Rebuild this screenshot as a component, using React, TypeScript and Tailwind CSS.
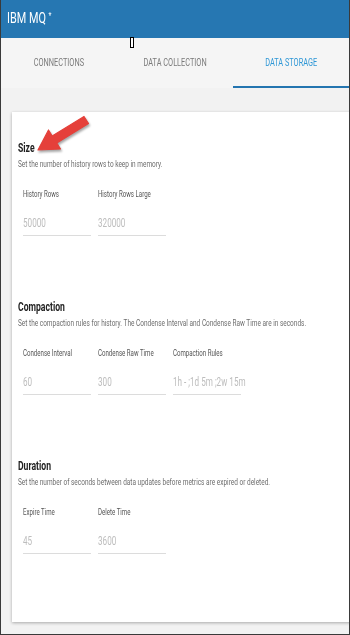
import React from 'react';

const font = { fontFamily: 'Roboto, "Liberation Sans", sans-serif' };

interface Field {
  label: string;
  value: string;
}

interface Section {
  title: string;
  description: string;
  fields: Field[];
}

const sections: Section[] = [
  {
    title: 'Size',
    description: 'Set the number of history rows to keep in memory.',
    fields: [
      { label: 'History Rows', value: '50000' },
      { label: 'History Rows Large', value: '320000' },
    ],
  },
  {
    title: 'Compaction',
    description:
      'Set the compaction rules for history. The Condense Interval and Condense Raw Time are in seconds.',
    fields: [
      { label: 'Condense Interval', value: '60' },
      { label: 'Condense Raw Time', value: '300' },
      { label: 'Compaction Rules', value: '1h - ;1d 5m ;2w 15m' },
    ],
  },
  {
    title: 'Duration',
    description: 'Set the number of seconds between data updates before metrics are expired or deleted.',
    fields: [
      { label: 'Expire Time', value: '45' },
      { label: 'Delete Time', value: '3600' },
    ],
  },
];

const tabs = ['CONNECTIONS', 'DATA COLLECTION', 'DATA STORAGE'];

const App: React.FC = () => {
  return (
    <div
      className="relative w-[350px] h-[635px] flex flex-col overflow-hidden border-x border-b border-[#3a3a3a] bg-[#f2f2f2]"
      style={font}
    >
      {/* Header */}
      <div className="h-[38px] shrink-0 bg-[#2677b2] flex items-center px-[6px]">
        <span className="inline-block origin-left scale-x-[0.75] whitespace-nowrap text-white text-[14.5px] leading-none">
          IBM MQ <span className="text-[9px] relative top-[-4px]">*</span>
        </span>
      </div>

      {/* Tabs */}
      <div className="h-[50px] shrink-0 bg-[#f5f5f5] grid grid-cols-3">
        {tabs.map((tab, i) => (
          <div
            key={tab}
            className={`flex items-center justify-center border-b-[2px] ${
              i === 2 ? 'border-[#2475b0] text-[#2e97d6]' : 'border-transparent text-[#7a7a7a]'
            }`}
          >
            <span className="inline-block scale-x-[0.7] whitespace-nowrap text-[10.5px] leading-none mt-[2px]">
              {tab}
            </span>
          </div>
        ))}
      </div>

      {/* Text cursor */}
      <div className="absolute left-[129px] top-[37px] w-[4px] h-[11px] border border-black bg-white" />

      {/* Body */}
      <div className="flex-1 flex min-h-0">
        <div className="flex-1 pl-[11px] pt-[24px] pr-[10px] pb-[12px]">
          <div className="relative h-full bg-white shadow-[0_1px_3px_rgba(0,0,0,0.3)] pl-[6px] pt-[29px]">
            {sections.map((section, si) => (
              <div key={section.title} className={si > 0 ? 'mt-[64px]' : ''}>
                <div className="h-[14px] leading-[14px] text-[12px] font-bold text-[#222] origin-left scale-x-[0.72] whitespace-nowrap">
                  {section.title}
                </div>
                <div className="mt-[3px] h-[12px] leading-[12px] text-[9px] text-[#6e6e6e] origin-left scale-x-[0.72] whitespace-nowrap">
                  {section.description}
                </div>
                <div className="mt-[18px] pl-[5px] flex gap-[7px]">
                  {section.fields.map((field) => (
                    <div key={field.label} className="w-[68px]">
                      <div className="h-[12px] leading-[12px] text-[8.5px] text-[#555] origin-left scale-x-[0.72] whitespace-nowrap">
                        {field.label}
                      </div>
                      <div className="mt-[12px] h-[24px] border-b border-[#dcdcdc] flex items-center">
                        <span className="inline-block origin-left scale-x-[0.65] whitespace-nowrap text-[12.5px] text-[#bdbdbd] leading-none">
                          {field.value}
                        </span>
                      </div>
                    </div>
                  ))}
                </div>
              </div>
            ))}

            {/* Red annotation arrow */}
            <svg
              className="absolute left-[19px] top-[0px] drop-shadow-[1px_2px_1px_rgba(0,0,0,0.35)]"
              width="64"
              height="45"
              viewBox="0 0 64 45"
            >
              <polygon
                points="7,38 29.5,37 25.8,31 57.5,11.5 53,4.5 21.2,24 17.5,18"
                fill="#e5403a"
                stroke="#e5403a"
                strokeWidth="1.2"
                strokeLinejoin="round"
              />
            </svg>
          </div>
        </div>

        {/* Scrollbar */}
        <div className="w-[9px] shrink-0 bg-[#f1f1f1] flex flex-col items-center pt-[4px] pb-[12px]">
          <div className="w-0 h-0 border-x-[3px] border-x-transparent border-b-[4px] border-b-[#a3a3a3]" />
          <div className="mt-[9px] w-[7px] h-[208px] bg-[#c1c1c1]" />
          <div className="flex-1" />
          <div className="w-0 h-0 border-x-[3px] border-x-transparent border-t-[4px] border-t-[#505050]" />
        </div>
      </div>
    </div>
  );
};

export default App;
